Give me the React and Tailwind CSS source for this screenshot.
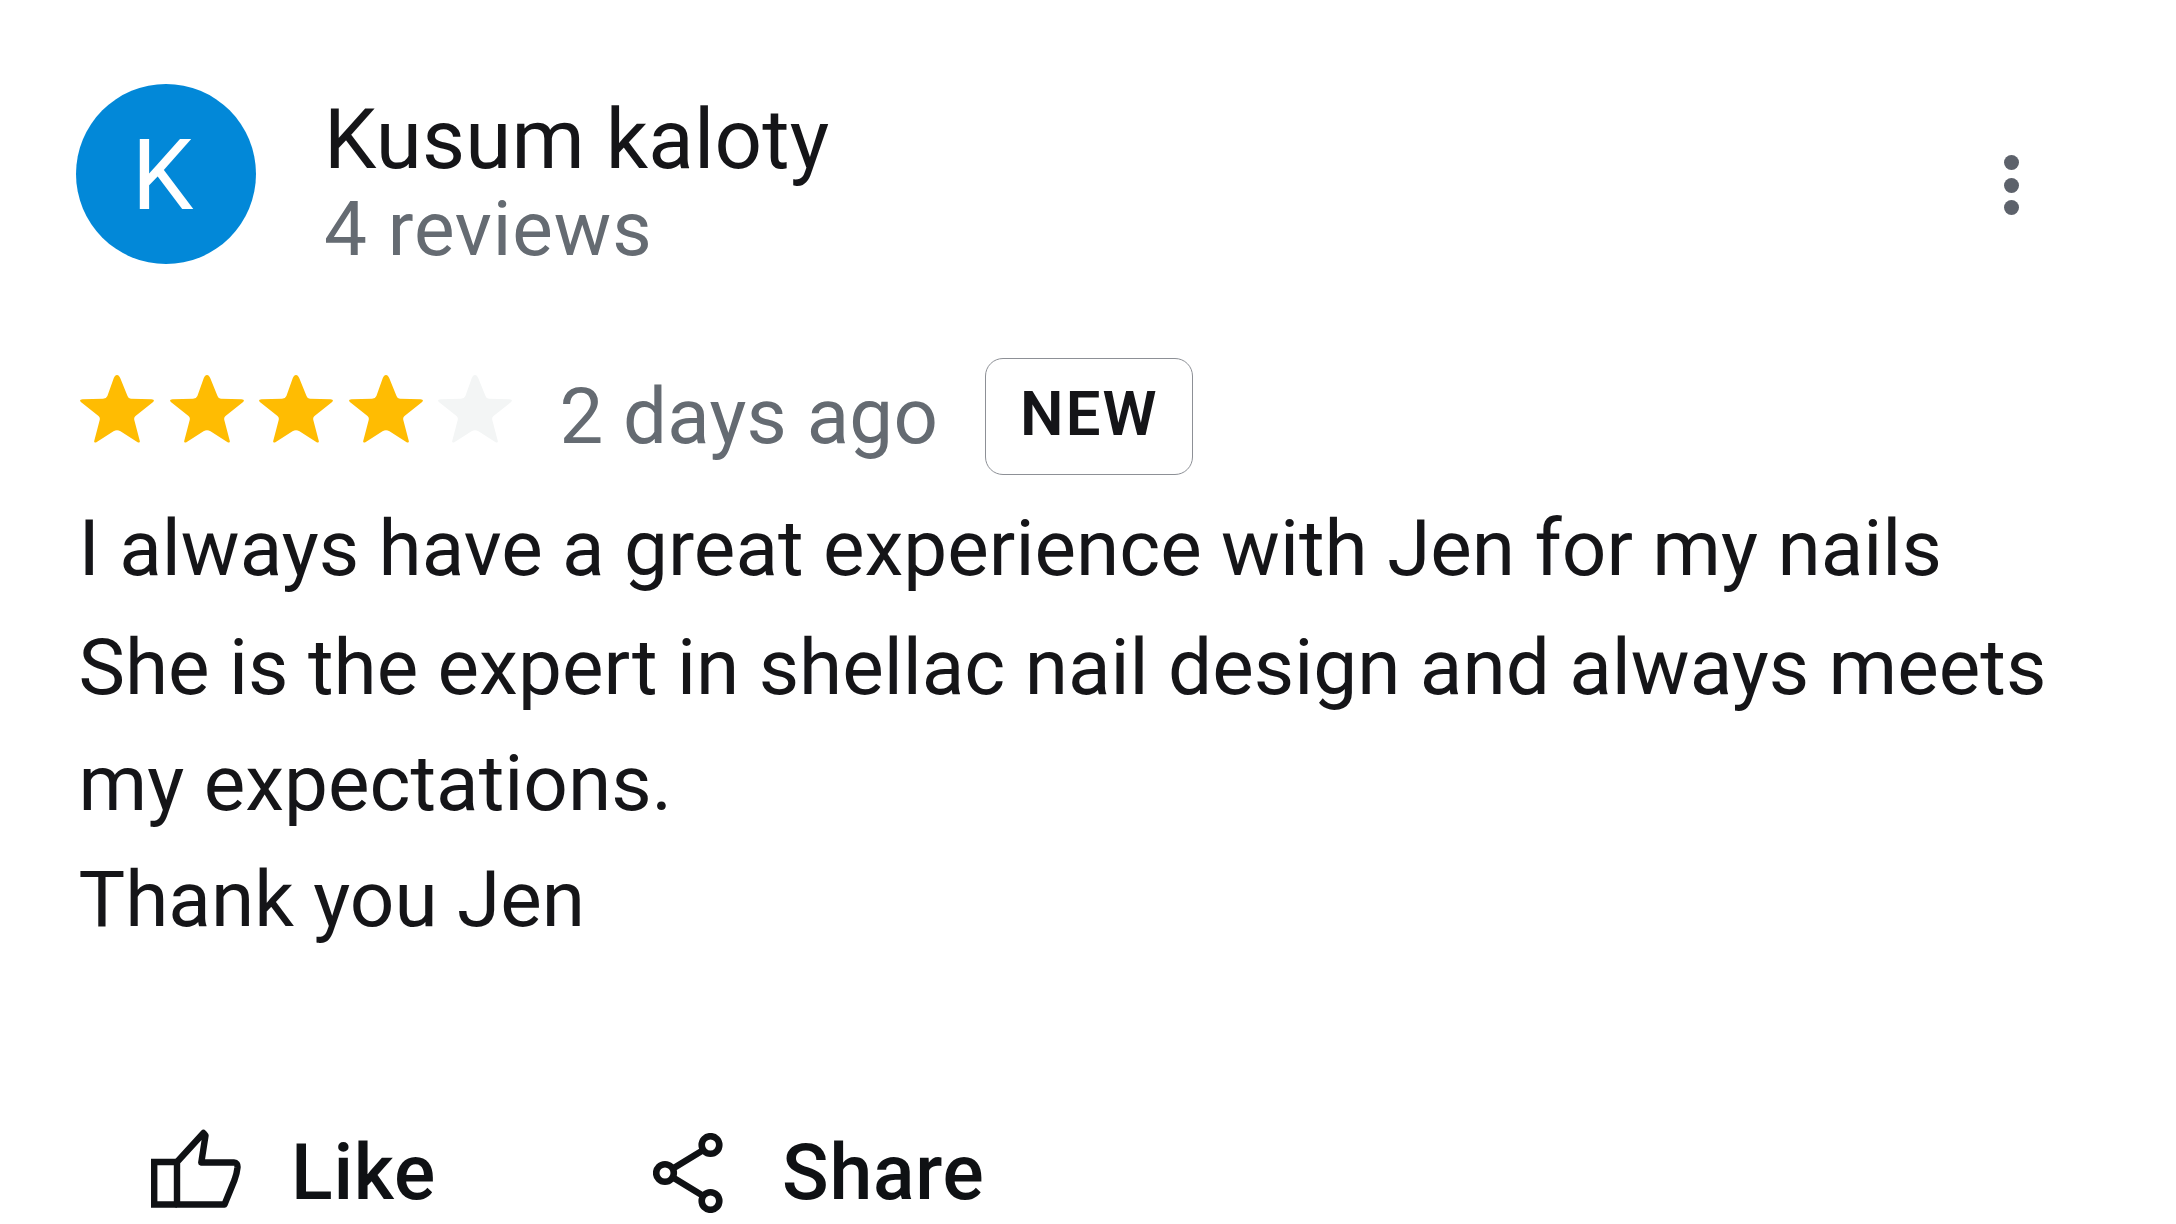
import React from 'react';

const STAR_PATH =
  'M37 0C38.6 0 39.6 1.5 40.2 3L47.5 21Q48.3 23.5 51 23.7L71.5 24.2C74.5 24.4 74.5 26 72.5 27.6L55.5 41Q53.7 42.5 54.3 45L59.8 66C60.2 67.7 59 68 57.6 67.2L40.5 56.3Q37 54.3 33.5 56.3L16.4 67.2C15 68 13.8 67.7 14.2 66L19.7 45Q20.3 42.5 18.5 41L1.5 27.6C-.5 26 -.5 24.4 2.5 24.2L23 23.7Q26.5 23.5 27.4 21L33.8 3C34.4 1.5 35.4 0 37 0Z';

function Star({ filled }) {
  return (
    <svg className={filled ? 'w-[74px] h-[68px] text-[#ffbc02]' : 'w-[74px] h-[68px] text-[#f3f5f5]'} viewBox="0 0 74 68" fill="currentColor">
      <path d={STAR_PATH} />
    </svg>
  );
}

function Rating({ value }) {
  return (
    <div className="flex gap-[15.6px]">
      {[1, 2, 3, 4, 5].map((n) => (
        <Star key={n} filled={n <= value} />
      ))}
    </div>
  );
}

function LikeIcon() {
  return (
    <svg className="w-[90px] h-[79px]" viewBox="0 0 90 79" fill="none" stroke="currentColor" strokeWidth="6.4" strokeLinejoin="round">
      <path strokeLinejoin="miter" d="M26 75.5H3.2V33H26" />
      <path d="M26 75.5V33L52.5 4L54.5 6.5L50.3 33.5H83Q86.8 33.5 86.5 38.5Q86 44 83.5 51L73.5 75.5Z" />
    </svg>
  );
}

function ShareIcon() {
  return (
    <svg className="w-[70px] h-[80px]" viewBox="0 0 70 80" fill="none" stroke="currentColor" strokeWidth="6.6">
      <circle cx="57.5" cy="12" r="8.8" />
      <circle cx="12" cy="40" r="8.8" />
      <circle cx="57.5" cy="68" r="8.8" />
      <path d="M20 35.5L49.5 17.5M20 44.5L49.5 62.5" />
    </svg>
  );
}

function Header() {
  return (
    <header className="flex items-start">
      <div className="mt-[84px] flex h-[180px] w-[180px] items-center justify-center rounded-full bg-[#0288d8] text-[98px] leading-none text-white">
        <span className="mr-[7px] mt-[3px]">K</span>
      </div>
      <div className="ml-[68px] mt-[95px] whitespace-nowrap">
        <h1 className="text-[83.5px] leading-[90px] tracking-[0.2px] text-[#151518]">Kusum kaloty</h1>
        <p className="text-[76.5px] leading-[88px] tracking-[0.9px] text-[#656b72]">4 reviews</p>
      </div>
      <button className="ml-auto mr-[157px] mt-[155px] flex flex-col gap-[7.5px]" aria-label="More options">
        <span className="h-[15px] w-[15px] rounded-full bg-[#5d626b]" />
        <span className="h-[15px] w-[15px] rounded-full bg-[#5d626b]" />
        <span className="h-[15px] w-[15px] rounded-full bg-[#5d626b]" />
      </button>
    </header>
  );
}

export default function App() {
  return (
    <main className="h-[1224px] w-[2176px] overflow-hidden bg-white font-['Roboto',sans-serif] text-[#151518]">
      <div className="pl-[76px]">
        <Header />

        <div className="mt-[85px] flex h-[117px] items-start pl-[4px]">
          <div className="mt-[17px]">
            <Rating value={4} />
          </div>
          <span className="ml-[47px] mt-[14px] w-[376px] whitespace-nowrap text-[78px] leading-[90px] tracking-[0.25px] text-[#656b72]">2 days ago</span>
          <span className="ml-[50px] flex h-[117px] w-[208px] items-center justify-center rounded-[18px] border border-[#8d9096] pb-[4px] text-[61.5px] font-semibold leading-none tracking-[2.2px]">
            NEW
          </span>
        </div>

        <div className="mt-[15px] whitespace-nowrap pl-[2.5px] text-[78.3px] leading-[116px]">
          <p>I always have a great experience with Jen for my nails</p>
          <p className="mt-[3px]">She is the expert in shellac nail design and always meets</p>
          <p>my expectations.</p>
          <p>Thank you Jen</p>
        </div>

        <div className="mt-[172px] flex items-start pl-[75px] text-[77px] font-medium leading-[88px] tracking-[0.8px] text-[#0f1114]">
          <button className="flex w-[502px] items-start">
            <LikeIcon />
            <span className="ml-[50px]">Like</span>
          </button>
          <button className="flex items-start">
            <span className="mt-[4px]">
              <ShareIcon />
            </span>
            <span className="ml-[59px]">Share</span>
          </button>
        </div>
      </div>
    </main>
  );
}
